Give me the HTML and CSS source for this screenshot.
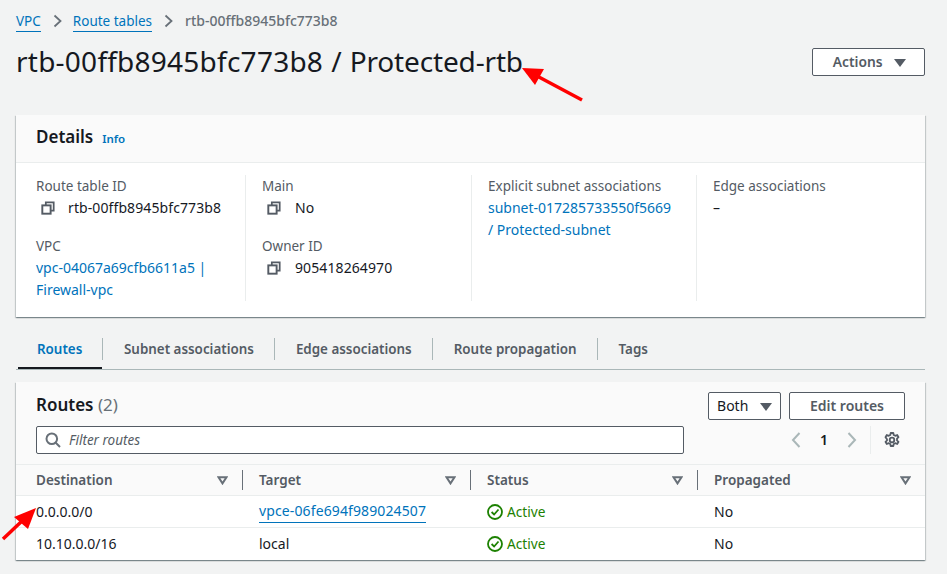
FILE: index.html
```html
<!DOCTYPE html>
<html lang="en">
<head>
    <meta charset="UTF-8">
    <meta name="viewport" content="width=device-width, initial-scale=1.0">
    <title>rtb-00ffb8945bfc773b8 / Protected-rtb</title>
    <link rel="stylesheet" href="styles.css">
</head>
<body>
    <svg width="0" height="0" class="defs">
        <symbol id="copy" viewBox="0 0 16 16">
            <path d="M5.5 4.5V1.5h9V11h-3" fill="none" stroke="#545b64" stroke-width="2"/>
            <rect x="1.5" y="5" width="9.5" height="9.5" fill="none" stroke="#545b64" stroke-width="2.2"/>
        </symbol>
        <symbol id="ok" viewBox="0 0 16 16">
            <circle cx="8" cy="8" r="7" fill="none" stroke="#1d8102" stroke-width="1.8"/>
            <path d="M4.6 8l2.5 2.5 4.4-5" fill="none" stroke="#1d8102" stroke-width="1.8"/>
        </symbol>
        <symbol id="sort" viewBox="0 0 11 9">
            <path d="M1.5 1.2h8L5.5 7.4z" fill="none" stroke="#687078" stroke-width="2"/>
        </symbol>
    </svg>

    <div class="page">
        <nav class="crumbs">
            <a href="#">VPC</a>
            <svg class="crumb-sep" width="9" height="14" viewBox="0 0 9 14"><path d="M1.5 1.5L7.5 7l-6 5.5" fill="none" stroke="#687078" stroke-width="1.8"/></svg>
            <a href="#">Route tables</a>
            <svg class="crumb-sep" width="9" height="14" viewBox="0 0 9 14"><path d="M1.5 1.5L7.5 7l-6 5.5" fill="none" stroke="#687078" stroke-width="1.8"/></svg>
            <span class="crumb-current">rtb-00ffb8945bfc773b8</span>
        </nav>

        <header class="title-row">
            <h1><span class="rtb-id">rtb-00ffb8945bfc773b8</span> / Protected-rtb</h1>
            <button class="btn btn-actions">Actions <span class="caret"></span></button>
        </header>

        <section class="card details">
            <div class="details-head">
                <h2>Details</h2>
                <a href="#" class="info">Info</a>
            </div>
            <div class="details-grid">
                <div class="col">
                    <div class="label">Route table ID</div>
                    <div class="value copy"><svg class="copy-icon"><use href="#copy"/></svg>rtb-00ffb8945bfc773b8</div>
                    <div class="label second">VPC</div>
                    <div class="value"><a href="#">vpc-04067a69cfb6611a5 | Firewall-vpc</a></div>
                </div>
                <div class="col">
                    <div class="label">Main</div>
                    <div class="value copy"><svg class="copy-icon"><use href="#copy"/></svg>No</div>
                    <div class="label second">Owner ID</div>
                    <div class="value copy"><svg class="copy-icon"><use href="#copy"/></svg>905418264970</div>
                </div>
                <div class="col col-subnet">
                    <div class="label">Explicit subnet associations</div>
                    <div class="value"><a href="#">subnet-017285733550f5669 / Protected-subnet</a></div>
                </div>
                <div class="col">
                    <div class="label">Edge associations</div>
                    <div class="value">–</div>
                </div>
            </div>
        </section>

        <div class="tabs">
            <a href="#" class="tab active">Routes</a>
            <a href="#" class="tab">Subnet associations</a>
            <a href="#" class="tab">Edge associations</a>
            <a href="#" class="tab">Route propagation</a>
            <a href="#" class="tab">Tags</a>
        </div>

        <section class="card routes">
            <div class="routes-head">
                <div class="routes-left">
                    <h2>Routes <span class="count">(2)</span></h2>
                    <div class="filter">
                        <svg width="16" height="16" viewBox="0 0 16 16"><circle cx="6.8" cy="6.8" r="5.3" fill="none" stroke="#687078" stroke-width="2"/><path d="M10.5 10.5L15 15" stroke="#687078" stroke-width="2"/></svg>
                        <span>Filter routes</span>
                    </div>
                </div>
                <div class="routes-right">
                    <div class="route-btns">
                        <button class="btn btn-both">Both <span class="caret"></span></button>
                        <button class="btn btn-edit">Edit routes</button>
                    </div>
                    <div class="pager">
                        <svg width="10" height="16" viewBox="0 0 10 16"><path d="M8.5 1L2 8l6.5 7" fill="none" stroke="#aab7b8" stroke-width="2"/></svg>
                        <span class="page-num">1</span>
                        <svg width="10" height="16" viewBox="0 0 10 16"><path d="M1.5 1L8 8l-6.5 7" fill="none" stroke="#aab7b8" stroke-width="2"/></svg>
                        <span class="pager-sep"></span>
                        <svg class="gear" width="16" height="16" viewBox="0 0 16 16"><path d="M6.7 1h2.6l.4 2 1.6.8 1.9-.8 1.3 2.2-1.5 1.4v1.8l1.5 1.4-1.3 2.2-1.9-.8-1.6.8-.4 2H6.7l-.4-2-1.6-.8-1.9.8-1.3-2.2 1.5-1.4V7.2L1.5 5.2l1.3-2.2 1.9.8 1.6-.8z" fill="none" stroke="#545b64" stroke-width="1.8" stroke-linejoin="round"/><circle cx="8" cy="8" r="2.3" fill="none" stroke="#545b64" stroke-width="1.8"/></svg>
                    </div>
                </div>
            </div>

            <div class="table">
                <div class="th">Destination<svg class="sort"><use href="#sort"/></svg></div>
                <div class="th">Target<svg class="sort"><use href="#sort"/></svg></div>
                <div class="th">Status<svg class="sort"><use href="#sort"/></svg></div>
                <div class="th last">Propagated<svg class="sort"><use href="#sort"/></svg></div>

                <div class="td">0.0.0.0/0</div>
                <div class="td"><a href="#" class="under">vpce-06fe694f989024507</a></div>
                <div class="td status"><svg class="ok"><use href="#ok"/></svg>Active</div>
                <div class="td">No</div>

                <div class="td">10.10.0.0/16</div>
                <div class="td">local</div>
                <div class="td status"><svg class="ok"><use href="#ok"/></svg>Active</div>
                <div class="td">No</div>
            </div>
        </section>
    </div>

    <!-- Red annotation arrows drawn over the page -->
    <svg class="arrow arrow-title" width="66" height="40" viewBox="0 0 66 40">
        <path d="M61 33L16 9" stroke="#f00" stroke-width="3.5"/>
        <path d="M1 1l22 1-9 16z" fill="#f00"/>
    </svg>
    <svg class="arrow arrow-route" width="38" height="36" viewBox="0 0 38 36">
        <path d="M3 32L22 14" stroke="#f00" stroke-width="3.5"/>
        <path d="M36 1L14 10l14 12z" fill="#f00"/>
    </svg>
</body>
</html>
```

FILE: styles.css
```css
* {
    box-sizing: border-box;
    margin: 0;
    padding: 0;
}

html, body {
    height: 100%;
    overflow: hidden;
}

body {
    font-family: "Noto Sans", Arial, sans-serif;
    font-size: 14px;
    line-height: 22px;
    color: #16191f;
    background: #f2f3f3;
    position: relative;
}

a {
    color: #0073bb;
    text-decoration: none;
}

.defs {
    position: absolute;
}

.page {
    padding: 10px 22px 0 16px;
}

/* Breadcrumbs */
.crumbs {
    display: flex;
    align-items: center;
    height: 22px;
    font-size: 13.5px;
}

.crumbs a {
    border-bottom: 1px solid #0073bb;
    line-height: 20px;
}

.crumb-sep {
    margin: 0 11px 0 12px;
}

.crumb-current {
    color: #687078;
    font-weight: 500;
    font-size: 14px;
    margin-left: 1px;
}

/* Title */
.title-row {
    display: flex;
    justify-content: space-between;
    align-items: center;
    margin-top: 12px;
    height: 36px;
}

h1 {
    font-size: 28px;
    font-weight: 400;
    line-height: 36px;
    margin-top: -2px;
    letter-spacing: -0.15px;
    word-spacing: 1px;
}

.rtb-id {
    letter-spacing: 0.24px;
}

.btn {
    font-family: inherit;
    font-size: 14px;
    font-weight: 600;
    color: #545b64;
    background: #fff;
    border: 1px solid #545b64;
    border-radius: 2px;
    height: 28px;
    padding-bottom: 2px;
    cursor: pointer;
}

.btn-actions {
    width: 113px;
    padding-left: 2px;
    font-size: 13.8px;
}

.caret {
    display: inline-block;
    width: 0;
    height: 0;
    margin-left: 8px;
    border-left: 6px solid transparent;
    border-right: 6px solid transparent;
    border-top: 8px solid #545b64;
    vertical-align: 0;
}

/* Cards */
.card {
    background: #fff;
    box-shadow: 0 1px 1px 0 rgba(0, 28, 36, 0.3), 1px 1px 1px 0 rgba(0, 28, 36, 0.15), -1px 1px 1px 0 rgba(0, 28, 36, 0.15);
}

h2 {
    font-size: 17px;
    font-weight: 600;
    line-height: 22px;
}

.details {
    margin-top: 35px;
    height: 202px;
}

.details-head {
    display: flex;
    align-items: baseline;
    gap: 9px;
    height: 48px;
    padding: 11px 20px 0;
    background: #fafafa;
    border-bottom: 1px solid #eaeded;
}

.info {
    font-size: 11.5px;
    font-weight: 600;
}

.details-grid {
    display: grid;
    grid-template-columns: 230px 226px 225px 228px;
    padding-top: 12px;
}

.col {
    height: 126px;
    padding-left: 16px;
    padding-right: 16px;
    border-right: 1px solid #eaeded;
}

.col:first-child {
    padding-left: 20px;
}

.col:last-child {
    border-right: none;
}

.col-subnet {
    padding-right: 24px;
}

.label {
    color: #545b64;
    font-size: 13.5px;
}

.label.second {
    margin-top: 16px;
}

.copy {
    display: flex;
    align-items: center;
    letter-spacing: 0.1px;
}

.copy-icon {
    width: 14px;
    height: 14px;
    margin: 0 14px 0 5px;
}

.col:first-child .copy-icon {
    margin-right: 13px;
}

/* Tabs */
.tabs {
    display: flex;
    margin-top: 21px;
    height: 32px;
    border-bottom: 1px solid #aab7b8;
    font-size: 13.4px;
}

.tab {
    position: relative;
    height: 22px;
    padding: 0 20px 0 21px;
    font-weight: 600;
    color: #545b64;
    border-right: 1px solid #aab7b8;
}

.tab:last-child {
    border-right: none;
}

.tab.active {
    color: #0073bb;
    width: 87px;
}

.tab.active::after {
    content: "";
    position: absolute;
    left: 2px;
    right: 0;
    top: 29px;
    height: 2px;
    background: #16191f;
}

/* Routes */
.routes {
    margin-top: 12px;
    height: 178px;
}

.routes-head {
    display: flex;
    justify-content: space-between;
    height: 83px;
    padding: 10px 20px 0;
    background: #fafafa;
    border-bottom: 1px solid #eaeded;
}

.routes-left h2 {
    margin-top: 2px;
}

.count {
    font-weight: 400;
    color: #687078;
}

.filter {
    display: flex;
    align-items: center;
    gap: 8px;
    width: 648px;
    height: 28px;
    margin-top: 10px;
    padding-left: 8px;
    background: #fff;
    border: 1px solid #545b64;
    border-radius: 2px;
    color: #545b64;
    font-size: 13.5px;
    font-style: italic;
}

.route-btns {
    display: flex;
    gap: 8px;
}

.btn-both {
    width: 73px;
    font-weight: 400;
    color: #16191f;
}

.btn-edit {
    width: 116px;
}

.pager {
    display: flex;
    align-items: center;
    justify-content: flex-end;
    height: 28px;
    margin-top: 6px;
    color: #16191f;
}

.page-num {
    width: 46px;
    text-align: center;
    font-weight: 600;
}

.pager-sep {
    width: 1px;
    height: 28px;
    margin: 0 13px;
    background: #eaeded;
}

.gear {
    margin-right: 5px;
}

/* Table */
.table {
    display: grid;
    grid-template-columns: 227px 228px 227px 227px;
}

.th {
    display: flex;
    justify-content: space-between;
    align-items: center;
    height: 31px;
    padding: 0 15px 0 16px;
    background: #fafafa;
    border-bottom: 1px solid #eaeded;
    color: #545b64;
    font-size: 13.5px;
    font-weight: 600;
    position: relative;
}

.th:first-child {
    padding-left: 20px;
}

.th:not(.last)::after {
    content: "";
    position: absolute;
    right: 0;
    top: 5px;
    height: 20px;
    border-right: 1px solid #687078;
}

.th.last {
    padding-right: 14px;
}

.sort {
    width: 11px;
    height: 9px;
}

.td {
    display: flex;
    align-items: center;
    height: 32px;
    padding-left: 16px;
    border-bottom: 1px solid #eaeded;
}

.td:nth-child(4n+1) {
    padding-left: 20px;
}

.td:nth-last-child(-n+4) {
    border-bottom: none;
}

.under {
    border-bottom: 1px solid #0073bb;
    letter-spacing: 0.12px;
}

.status {
    color: #1d8102;
    font-size: 13.7px;
}

.ok {
    width: 16px;
    height: 16px;
    margin-right: 4px;
}

/* Annotation arrows */
.arrow {
    position: absolute;
}

.arrow-title {
    left: 521px;
    top: 67px;
}

.arrow-route {
    left: 0;
    top: 507px;
}
```
